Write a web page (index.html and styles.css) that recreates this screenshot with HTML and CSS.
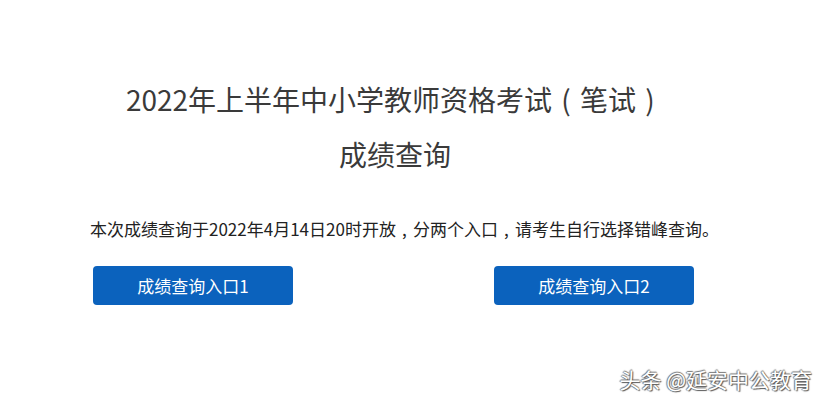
FILE: index.html
```html
<!DOCTYPE html>
<html lang="zh-CN">
<head>
    <meta charset="UTF-8">
    <meta name="viewport" content="width=device-width, initial-scale=1.0">
    <title>成绩查询</title>
    <link rel="stylesheet" href="styles.css">
</head>
<body>

    <div class="container">
        <h1 class="title">2022年上半年中小学教师资格考试<span class="punct">(</span>笔试<span class="punct">)</span><br>成绩查询</h1>
        <p class="notice">本次成绩查询于2022年4月14日20时开放<span class="punct">,</span>分两个入口<span class="punct">,</span>请考生自行选择错峰查询。</p>
        <div class="entries">
            <a class="entry" href="#">成绩查询入口1</a>
            <a class="entry" href="#">成绩查询入口2</a>
        </div>
    </div>

    <div class="watermark">头条 @延安中公教育</div>

</body>
</html>
```

FILE: styles.css
```css
body {
    margin: 0;
    padding: 0;
    background-color: #ffffff;
    font-family: "Noto Sans CJK SC", "Noto Sans", sans-serif;
    width: 824px;
    height: 405px;
    position: relative;
    overflow: hidden;
}

.container {
    margin-left: 90px;
    width: 610px;
    padding-top: 72px;
}

.title {
    margin: 0;
    font-size: 28px;
    font-weight: normal;
    line-height: 55px;
    color: #3a3a3a;
    text-align: center;
}

/* full-width punctuation drawn centred in its em box */
.punct {
    display: inline-block;
    width: 1em;
    text-align: center;
}

.notice {
    margin: 35px 0 0 0;
    font-size: 17px;
    line-height: 24px;
    color: #222222;
    white-space: nowrap;
}

.entries {
    display: flex;
    gap: 201px;
    margin-top: 25px;
    padding-left: 3px;
}

.entry {
    display: flex;
    justify-content: center;
    align-items: center;
    width: 200px;
    height: 39px;
    background-color: #0b62bd;
    border-radius: 4px;
    color: #ffffff;
    font-size: 17px;
    text-decoration: none;
}

.watermark {
    position: absolute;
    right: 12px;
    bottom: 11px;
    font-size: 21px;
    color: #ffffff;
    text-shadow: 1px 1px 1px #555555, -1px 0 1px #777777, 0 -1px 1px #777777;
}
```
